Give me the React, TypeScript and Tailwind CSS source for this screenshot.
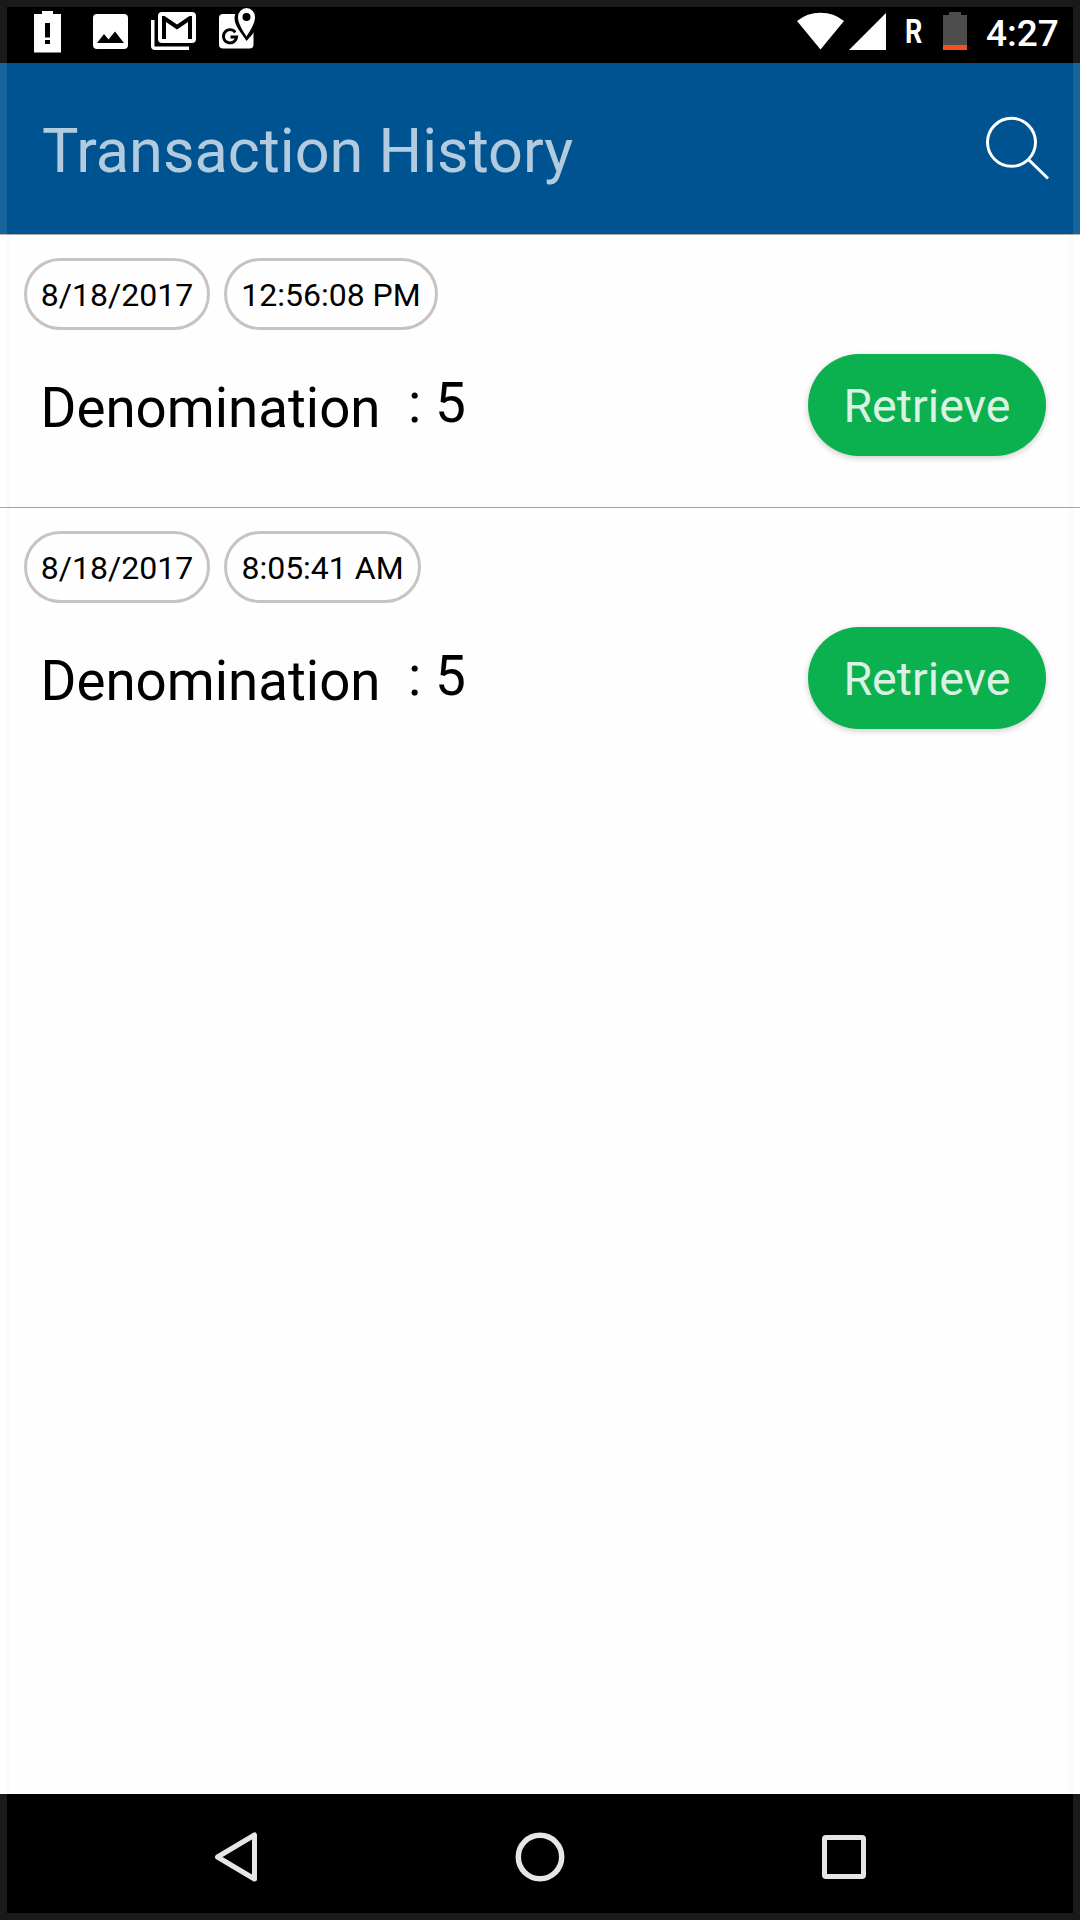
const transactions = [
  { date: '8/18/2017', time: '12:56:08 PM', timeWidth: 'w-[214px]', amount: '5' },
  { date: '8/18/2017', time: '8:05:41 AM', timeWidth: 'w-[197px]', amount: '5' },
];

function StatusBar() {
  return (
    <div className="flex h-[63px] items-start justify-between bg-black pr-[21px] pl-[34px] text-white">
      <div className="flex">
        <svg className="mt-[11px] h-[42px] w-[27px]" viewBox="0 0 27 42" fill="currentColor">
          <path fillRule="evenodd" d="M8 0h11v3h8v38.500H0V3h8zM11 12v14.500h5V12zM11 29v4h5v-4z" />
        </svg>
        <svg className="mt-[14px] ml-[32px] h-[35px] w-[35px]" viewBox="0 0 35 35" fill="currentColor">
          <path fillRule="evenodd" d="M4 0h27a4 4 0 0 1 4 4v27a4 4 0 0 1-4 4H4a4 4 0 0 1-4-4V4a4 4 0 0 1 4-4zM4 29h27L22 17.500l-6.500 8-4.500-5.500z" />
        </svg>
        <svg className="mt-[12px] ml-[23px] h-[39px] w-[45px]" viewBox="0 0 45 39" fill="currentColor">
          <path fillRule="evenodd" d="M11 0h30a4 4 0 0 1 4 4v23a4 4 0 0 1-4 4H11a4 4 0 0 1-4-4V4a4 4 0 0 1 4-4zM11 4v23h4V10l11 7.500L37 10v17h4V4h-2.500L26 12.500 13.500 4z" />
          <path d="M0 8h3.500v26.500H38V38H4a4 4 0 0 1-4-4z" />
        </svg>
        <svg className="mt-[8px] ml-[23px] h-[41px] w-[37px]" viewBox="0 0 37 41">
          <rect x="0" y="6" width="34.500" height="34.500" rx="4" fill="white" />
          <path d="M27.500 33C22 24 15.500 18 15.500 10q0-5 3-10H40v14Q38 22 27.500 33z" fill="black" />
          <path d="M27.500 28.500C23.500 22 19 15.500 19 9a8.500 9 0 0 1 17 0c0 6.500-4.500 13-8.500 19.500z" fill="white" />
          <circle cx="27.500" cy="9" r="4" fill="black" />
          <path d="M16.300 24.300A6.600 6.600 0 1 0 17.600 29H11.500" fill="none" stroke="black" strokeWidth="2.800" />
        </svg>
      </div>
      <div className="flex">
        <svg className="mt-[12px] h-[38px] w-[47px]" viewBox="0 0 47 38" fill="currentColor">
          <path d="M0 9Q10 .700 23.500 .700T47 9L23.500 37.500z" />
        </svg>
        <svg className="mt-[13px] ml-[5px] h-[37px] w-[37px]" viewBox="0 0 37 37" fill="currentColor">
          <path d="M37 0v37H0z" />
        </svg>
        <span className="mt-[13px] ml-[19px] w-[22px] origin-left scale-x-[0.82] text-[33px] leading-[37px] font-bold">R</span>
        <svg className="mt-[12px] ml-[16px] h-[38px] w-[24px]" viewBox="0 0 24 38">
          <path d="M6 0h12v3h6v30H0V3h6z" fill="#4d4d4d" />
          <path d="M0 33h24v5H0z" fill="#f4511e" />
        </svg>
        <span className="mt-[13px] ml-[19px] w-[73px] text-[37px] leading-[41px] font-medium whitespace-nowrap">4:27</span>
      </div>
    </div>
  );
}

function Header() {
  return (
    <header className="flex h-[172px] items-start justify-between border-b border-[#aaaaaa] bg-[#005391] pr-[30px] pl-[42px]">
      <h1 className="mt-[53px] text-[61.2px] leading-[70px] whitespace-nowrap text-white/70">Transaction History</h1>
      <svg className="mt-[53px] h-[64px] w-[64px]" viewBox="0 0 64 64" fill="none" stroke="white" strokeWidth="3">
        <circle cx="25.500" cy="26.300" r="24" />
        <path d="M42.500 43.500L62 62.500" />
      </svg>
    </header>
  );
}

function Transaction({ date, time, timeWidth, amount }: (typeof transactions)[number]) {
  return (
    <>
      <div className="flex h-[72px] gap-[14px] text-[32px] leading-[32px] whitespace-nowrap text-black">
        <span className="flex w-[186px] items-center justify-center rounded-full border-[3px] border-[#c8c2c2] pt-[1px]">{date}</span>
        <span className={`flex items-center justify-center rounded-full border-[3px] border-[#c8c2c2] pt-[1px] ${timeWidth}`}>{time}</span>
      </div>
      <div className="mt-[24px] flex h-[102px] items-start text-black">
        <span className="mt-[24px] ml-[16.500px] w-[367.500px] text-[54.700px] leading-[60px]">Denomination</span>
        <span className="mt-[19px] text-[55px] leading-[60px] whitespace-pre">: {amount}</span>
        <button className="ml-auto flex h-[102px] w-[238px] items-center justify-center rounded-full bg-[#0cb14f] pt-[3px] text-[46.600px] leading-[55px] text-white/87 shadow-[0_2px_6px_rgba(0,0,0,0.2)]">
          Retrieve
        </button>
      </div>
    </>
  );
}

function NavBar() {
  return (
    <nav className="flex h-[126px] items-center bg-black pl-[214px] text-[#e6e6e6]">
      <svg className="h-[50px] w-[44px]" viewBox="0 0 44 50" fill="none" stroke="currentColor" strokeWidth="5" strokeLinejoin="round">
        <path d="M40.500 3v44L3.500 25z" />
      </svg>
      <svg className="ml-[257px] h-[50px] w-[50px]" viewBox="0 0 50 50" fill="none" stroke="currentColor" strokeWidth="5.500">
        <circle cx="25" cy="25" r="21.700" />
      </svg>
      <svg className="ml-[257px] h-[44px] w-[44px]" viewBox="0 0 44 44" fill="none" stroke="currentColor" strokeWidth="5">
        <rect x="2.500" y="2.500" width="39" height="39" rx="1.500" />
      </svg>
    </nav>
  );
}

export default function App() {
  return (
    <div className="relative flex h-[1920px] w-[1080px] flex-col overflow-hidden bg-white font-[Roboto,sans-serif]">
      <StatusBar />
      <Header />
      <main className="flex-1 bg-[linear-gradient(to_right,#fff_7px,#fbfbfb_7px,#fbfbfb_10px,#fefefe_10px,#fefefe_1069px,#fbfbfb_1069px,#fbfbfb_1073px,#fff_1073px)]">
        {transactions.map((item, i) => (
          <section
            key={item.time}
            className={i === 0 ? 'h-[273px] border-b border-[#a0a0a0] pt-[23px] pr-[34px] pl-[24px]' : 'h-[273px] pt-[23px] pr-[34px] pl-[24px]'}
          >
            <Transaction {...item} />
          </section>
        ))}
      </main>
      <NavBar />
      <div className="pointer-events-none absolute inset-0 border-[7px] border-white/10" />
    </div>
  );
}
